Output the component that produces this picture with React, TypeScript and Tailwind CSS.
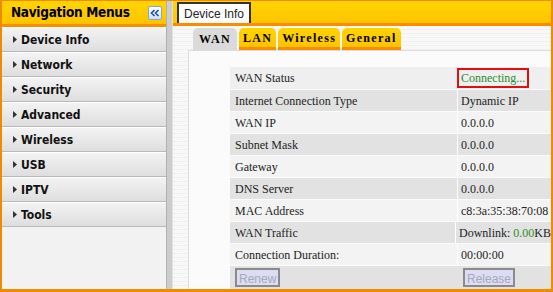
import { useState } from "react";

const menus = ["Device Info", "Network", "Security", "Advanced", "Wireless", "USB", "IPTV", "Tools"];
const subTabs = ["WAN", "LAN", "Wireless", "General"];

const rows: { label: string; value: React.ReactNode }[] = [
  { label: "Internet Connection Type", value: "Dynamic IP" },
  { label: "WAN IP", value: "0.0.0.0" },
  { label: "Subnet Mask", value: "0.0.0.0" },
  { label: "Gateway", value: "0.0.0.0" },
  { label: "DNS Server", value: "0.0.0.0" },
  { label: "MAC Address", value: "c8:3a:35:38:70:08" },
  {
    label: "WAN Traffic",
    value: (
      <span>
        Downlink: <span className="text-[#2e8b2e]">0.00</span>KB
      </span>
    ),
  },
  { label: "Connection Duration:", value: "00:00:00" },
];

export default function App() {
  const [tab, setTab] = useState("WAN");

  return (
    <div className="w-[553px] h-[292px] overflow-hidden flex border-l-2 border-r-2 border-b-[3px] border-t border-[#f08a00] bg-[#f2f2f2] font-['DejaVu_Sans_Condensed','DejaVu_Sans',sans-serif]">
      {/* sidebar */}
      <aside className="w-[164px] shrink-0 flex flex-col bg-[#f2f2f2]">
        <div className="h-[26px] flex items-center justify-between pl-[9px] pr-[4px] bg-gradient-to-b from-[#ffd400] to-[#ffc400] border-b-[3px] border-[#fb8c00]">
          <p className="font-bold text-[13.5px] tracking-[-0.3px] text-black">Navigation Menus</p>
          <button className="w-[14px] h-[14px] rounded-[2px] border border-[#7fa8d8] bg-gradient-to-b from-white to-[#cfe0f4] flex items-center justify-center">
            <svg width="10" height="8" viewBox="0 0 10 8" fill="none" stroke="#1a4fa0" strokeWidth="1.6">
              <path d="M4.5 1 L1.5 4 L4.5 7 M8.5 1 L5.5 4 L8.5 7" />
            </svg>
          </button>
        </div>
        {menus.map((m) => (
          <div
            key={m}
            className="h-[25px] flex items-center pl-[11px] gap-[4px] bg-gradient-to-b from-[#f3f3f3] to-[#dedede] border-b border-[#b9b9b9] border-t border-t-white"
          >
            <svg width="4" height="7" viewBox="0 0 4 7">
              <path d="M0 0 L4 3.5 L0 7 Z" fill="#333" />
            </svg>
            <span className="font-bold text-[12px] text-[#111]">{m}</span>
          </div>
        ))}
      </aside>

      <div className="w-[7px] shrink-0 bg-[#cdcdcd] border-l border-[#b0b0b0] border-r border-r-[#e0e0e0]" />

      {/* content */}
      <main className="flex-1 flex flex-col min-w-0">
        <div className="h-[26px] flex items-end pl-[4px] bg-gradient-to-b from-[#ffd400] to-[#ffc400] border-b-[3px] border-[#fb8c00]">
          <div className="h-[21px] px-[5px] bg-white border-2 border-b-0 border-[#333] flex items-center text-[12px] text-[#222] font-['Liberation_Sans',sans-serif]">
            Device Info
          </div>
        </div>

        <div className="flex-1 flex flex-col bg-[repeating-linear-gradient(to_bottom,#f8f8f8_0px,#f8f8f8_3px,#f0f0f0_3px,#f0f0f0_4px)]">
          <div className="flex items-end gap-[2px] pl-[20px] pt-[2px] h-[24px]">
            {subTabs.map((t) => (
              <button
                key={t}
                onClick={() => setTab(t)}
                className={`h-[22px] rounded-t-[5px] font-['Liberation_Serif',serif] font-bold text-[12px] tracking-[1.3px] text-black ${
                  tab === t
                    ? "bg-[#dadada] px-[6px]"
                    : "px-[4px] bg-gradient-to-b from-[#ffd400] to-[#ffc400] border-b-[3px] border-[#fb8c00]"
                }`}
              >
                {t}
              </button>
            ))}
          </div>

          <div className="flex-1 ml-[15px] border-l border-t border-[#dcdcdc] bg-[#fbfbfb] pt-[16px] pl-[41px] font-['Liberation_Serif',serif] text-[12px] text-[#222]">
            <div className="flex flex-col gap-[1px]">
              <div className="flex gap-[2px] h-[22px] bg-[#efefef]">
                <div className="w-[225px] flex items-center pl-[5px]">WAN Status</div>
                <div className="flex-1 flex items-center">
                  <span className="h-[20px] flex items-center px-[2px] border-2 border-[#e01010] text-[#2e8b2e]">
                    Connecting...
                  </span>
                </div>
              </div>
              {rows.map((r, i) => (
                <div key={r.label} className={`flex gap-[2px] h-[21px] ${i % 2 === 0 ? "bg-[#e2e2e2]" : "bg-[#f3f3f3]"}`}>
                  <div className="w-[225px] flex items-center pl-[5px]">{r.label}</div>
                  <div className="flex-1 flex items-center pl-[3px] border-l border-white whitespace-nowrap">{r.value}</div>
                </div>
              ))}
              <div className="flex gap-[2px] h-[23px] bg-[#e2e2e2]">
                <div className="w-[225px] flex items-center pl-[5px]">
                  <button disabled className="h-[19px] px-[2px] bg-[#dcdcf4] border-2 border-[#8a8a8a] text-[12px] text-[#a8a8b8] font-['Liberation_Sans',sans-serif]">
                    Renew
                  </button>
                </div>
                <div className="flex-1 flex items-center pl-[6px]">
                  <button disabled className="h-[19px] px-[2px] bg-[#dcdcf4] border-2 border-[#8a8a8a] text-[12px] text-[#a8a8b8] font-['Liberation_Sans',sans-serif]">
                    Release
                  </button>
                </div>
              </div>
            </div>
          </div>
        </div>
      </main>
    </div>
  );
}
